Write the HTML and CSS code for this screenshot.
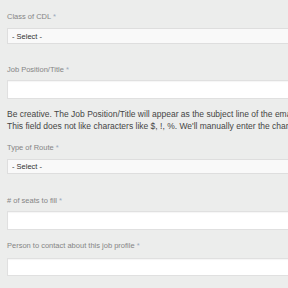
FILE: index.html
```html
<!DOCTYPE html>
<html>
<head>
<meta charset="utf-8">
<link rel="stylesheet" href="styles.css">
</head>
<body>
<form class="form">
  <div class="field f1">
    <label class="lbl">Class of CDL <span class="req">*</span></label>
    <select class="sel"><option>- Select -</option></select>
  </div>
  <div class="field f2">
    <label class="lbl">Job Position/Title <span class="req">*</span></label>
    <input class="txt" type="text">
    <p class="help">Be creative. The Job Position/Title will appear as the subject line of the email.<br>This field does not like characters like $, !, %. We'll manually enter the characters.</p>
  </div>
  <div class="field f3">
    <label class="lbl">Type of Route <span class="req">*</span></label>
    <select class="sel"><option>- Select -</option></select>
  </div>
  <div class="field f4">
    <label class="lbl"># of seats to fill <span class="req">*</span></label>
    <input class="txt" type="text">
  </div>
  <div class="field f5">
    <label class="lbl">Person to contact about this job profile <span class="req">*</span></label>
    <input class="txt" type="text">
  </div>
</form>
</body>
</html>
```
FILE: styles.css
```css
html, body {
  margin: 0;
  padding: 0;
  background: #ecedec;
  overflow: hidden;
}
body {
  width: 288px;
  height: 288px;
  font-family: "Liberation Sans", Arial, sans-serif;
}
.form {
  padding-left: 7px;
  display: flex;
  flex-direction: column;
}
.field {
  display: flex;
  flex-direction: column;
  align-items: flex-start;
}
.lbl {
  display: block;
  font-size: 7.5px;
  line-height: 10px;
  color: #858585;
  white-space: nowrap;
}
.req {
  color: #9aaabb;
}
.sel {
  appearance: none;
  -webkit-appearance: none;
  box-sizing: border-box;
  width: 330px;
  height: 16px;
  margin: 6px 0 0 0;
  padding: 0 4px;
  background: #f9f9f9;
  border: 1px solid #dedede;
  border-radius: 0;
  font-family: "Liberation Sans", Arial, sans-serif;
  font-size: 7.5px;
  color: #333;
  outline: none;
}
.txt {
  box-sizing: border-box;
  width: 330px;
  height: 19px;
  margin: 5px 0 0 0;
  padding: 0 4px;
  background: #fff;
  border: 1px solid #e0e0e0;
  border-radius: 0;
  box-shadow: inset 0 1px 1px rgba(0,0,0,0.04);
  outline: none;
}
.help {
  margin: 9px 0 0 0;
  font-size: 8.5px;
  line-height: 12px;
  color: #454545;
  white-space: nowrap;
}
.f1 { margin-top: 12px; }
.f2 { margin-top: 21px; }
.f3 { margin-top: 11px; }
.f3 .sel { height: 15px; }
.f4 { margin-top: 22px; }
.f5 { margin-top: 11px; }
.f5 .txt { margin-top: 7px; height: 18px; }
```
